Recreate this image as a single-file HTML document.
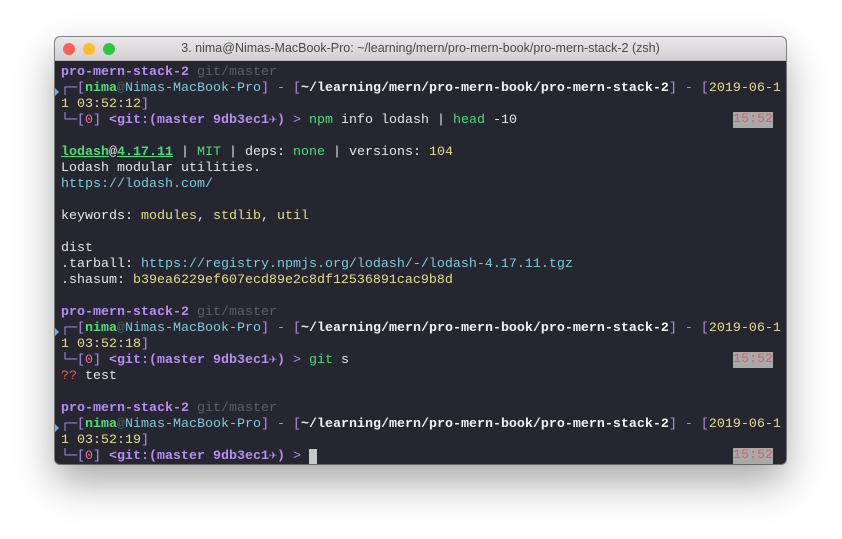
<!DOCTYPE html>
<html><head><style>
html,body{margin:0;padding:0;background:#fff;width:842px;height:539px;overflow:hidden}
.win{position:absolute;left:55px;top:37px;width:731px;height:427px;border-radius:5px;background:#262630;box-shadow:0 18px 40px rgba(0,0,0,.35),0 0 0 1px rgba(0,0,0,.45);overflow:hidden}
.tb{height:23px;background:linear-gradient(#e9e7e9,#d2d0d2);border-bottom:1px solid #b5b3b5;position:relative;font:12.5px "Liberation Sans",sans-serif;color:#4a4a4a;text-align:center;line-height:23px}
.d{position:absolute;top:6px;width:12px;height:12px;border-radius:50%}
.term{position:absolute;left:6px;top:28px;font:13.33px/16px "Liberation Mono",monospace;color:#e6e6e6;white-space:pre}
.b{font-weight:bold}
.p{color:#b48ef0}.g{color:#4ddc7a}.c{color:#7ccbd9}.y{color:#e3df8c}.r{color:#ef6fa0}.dim{color:#5c5c66}.w{color:#f2f2f2}.rr{color:#e05858}
.t{position:absolute;left:678px;width:40px;height:16px;background:#a9a9a9;color:#e25d5d;font:13.33px/16px "Liberation Mono",monospace}
.ar{position:absolute;left:0;width:0;height:0;border-top:4px solid transparent;border-bottom:4px solid transparent;border-left:4px solid #6aaef0}
</style></head><body>
<div class="win">
<div class="tb"><div class="d" style="left:8px;background:#fc5f57"></div><div class="d" style="left:28px;background:#fdbc2e"></div><div class="d" style="left:48px;background:#29c840"></div>3. nima@Nimas-MacBook-Pro: ~/learning/mern/pro-mern-book/pro-mern-stack-2 (zsh)</div>
<div class="ar" style="top:51px"></div><div class="ar" style="top:291px"></div><div class="ar" style="top:387px"></div>
<div class="term"><span class="p b">pro-mern-stack-2</span> <span class="dim">git/master</span>
<span class="p">┌─[</span><span class="g b">nima</span><span class="dim">@</span><span class="c">Nimas-MacBook-Pro</span><span class="p">] - [</span><span class="w b">~/learning/mern/pro-mern-book/pro-mern-stack-2</span><span class="p">] - [</span><span class="y">2019-06-1</span>
<span class="y">1 03:52:12</span><span class="p">]</span>
<span class="p">└─[</span><span class="r">0</span><span class="p">] <span class="b">&lt;git:(master 9db3ec1✈)</span> &gt;</span> <span class="g">npm</span> info lodash | <span class="g">head</span> -10

<span class="g b" style="text-decoration:underline">lodash</span>@<span class="g b" style="text-decoration:underline">4.17.11</span> | <span class="g">MIT</span> | deps: <span class="g">none</span> | versions: <span class="y">104</span>
Lodash modular utilities.
<span class="c">https://lodash.com/</span>

keywords: <span class="y">modules</span>, <span class="y">stdlib</span>, <span class="y">util</span>

dist
.tarball: <span class="c">https://registry.npmjs.org/lodash/-/lodash-4.17.11.tgz</span>
.shasum: <span class="y">b39ea6229ef607ecd89e2c8df12536891cac9b8d</span>

<span class="p b">pro-mern-stack-2</span> <span class="dim">git/master</span>
<span class="p">┌─[</span><span class="g b">nima</span><span class="dim">@</span><span class="c">Nimas-MacBook-Pro</span><span class="p">] - [</span><span class="w b">~/learning/mern/pro-mern-book/pro-mern-stack-2</span><span class="p">] - [</span><span class="y">2019-06-1</span>
<span class="y">1 03:52:18</span><span class="p">]</span>
<span class="p">└─[</span><span class="r">0</span><span class="p">] <span class="b">&lt;git:(master 9db3ec1✈)</span> &gt;</span> <span class="g">git</span> s
<span class="rr">??</span> test

<span class="p b">pro-mern-stack-2</span> <span class="dim">git/master</span>
<span class="p">┌─[</span><span class="g b">nima</span><span class="dim">@</span><span class="c">Nimas-MacBook-Pro</span><span class="p">] - [</span><span class="w b">~/learning/mern/pro-mern-book/pro-mern-stack-2</span><span class="p">] - [</span><span class="y">2019-06-1</span>
<span class="y">1 03:52:19</span><span class="p">]</span>
<span class="p">└─[</span><span class="r">0</span><span class="p">] <span class="b">&lt;git:(master 9db3ec1✈)</span> &gt;</span> <span style="background:#c8c8c8"> </span></div>
<div class="t" style="top:75px">15:52</div>
<div class="t" style="top:315px">15:52</div>
<div class="t" style="top:411px">15:52</div>
</div>
</body></html>
